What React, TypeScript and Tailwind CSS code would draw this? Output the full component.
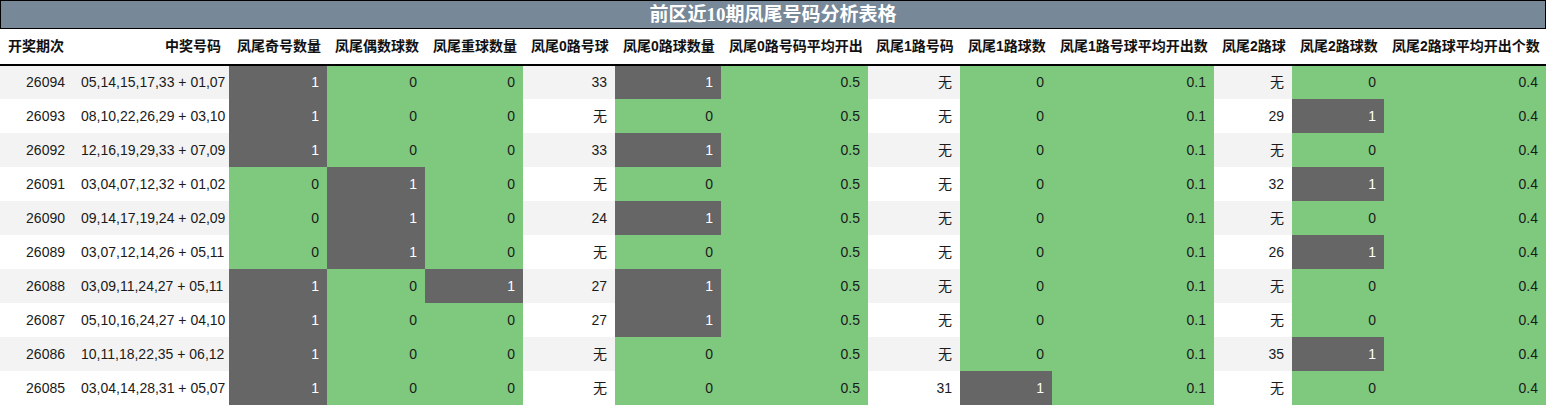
import React from "react";

type Cell = string;
const headers = [
  "开奖期次",
  "中奖号码",
  "凤尾奇号数量",
  "凤尾偶数球数",
  "凤尾重球数量",
  "凤尾0路号球",
  "凤尾0路球数量",
  "凤尾0路号码平均开出",
  "凤尾1路号码",
  "凤尾1路球数",
  "凤尾1路号球平均开出数",
  "凤尾2路球",
  "凤尾2路球数",
  "凤尾2路球平均开出个数",
];
const widths = [73, 156, 98, 98, 98, 92, 106, 147, 92, 92, 162, 78, 92, 162];

// kind: n = plain (row bg), c = count (1 gray, 0 green), a = avg (green)
const kinds = ["n", "n", "c", "c", "c", "n", "c", "a", "n", "c", "a", "n", "c", "a"];

const rows: Cell[][] = [
  ["26094", "05,14,15,17,33 + 01,07", "1", "0", "0", "33", "1", "0.5", "无", "0", "0.1", "无", "0", "0.4"],
  ["26093", "08,10,22,26,29 + 03,10", "1", "0", "0", "无", "0", "0.5", "无", "0", "0.1", "29", "1", "0.4"],
  ["26092", "12,16,19,29,33 + 07,09", "1", "0", "0", "33", "1", "0.5", "无", "0", "0.1", "无", "0", "0.4"],
  ["26091", "03,04,07,12,32 + 01,02", "0", "1", "0", "无", "0", "0.5", "无", "0", "0.1", "32", "1", "0.4"],
  ["26090", "09,14,17,19,24 + 02,09", "0", "1", "0", "24", "1", "0.5", "无", "0", "0.1", "无", "0", "0.4"],
  ["26089", "03,07,12,14,26 + 05,11", "0", "1", "0", "无", "0", "0.5", "无", "0", "0.1", "26", "1", "0.4"],
  ["26088", "03,09,11,24,27 + 05,11", "1", "0", "1", "27", "1", "0.5", "无", "0", "0.1", "无", "0", "0.4"],
  ["26087", "05,10,16,24,27 + 04,10", "1", "0", "0", "27", "1", "0.5", "无", "0", "0.1", "无", "0", "0.4"],
  ["26086", "10,11,18,22,35 + 06,12", "1", "0", "0", "无", "0", "0.5", "无", "0", "0.1", "35", "1", "0.4"],
  ["26085", "03,04,14,28,31 + 05,07", "1", "0", "0", "无", "0", "0.5", "31", "1", "0.1", "无", "0", "0.4"],
];

function cellClass(kind: string, v: string): string {
  if (kind === "c") {
    return v === "1" ? "bg-[#666666] text-white" : "bg-[#7fc97f] text-[#1a1a1a]";
  }
  if (kind === "a") return "bg-[#7fc97f] text-[#1a1a1a]";
  return "text-[#1a1a1a]";
}

export default function App() {
  return (
    <div
      className="w-[1546px] bg-white"
      style={{ fontFamily: '"Liberation Sans", "Noto Sans CJK SC", sans-serif' }}
    >
      <div
        className="h-[29px] border border-black bg-[#778899] text-white font-bold text-[19px] leading-[27px] text-center"
        style={{ fontFamily: '"Liberation Serif", "Noto Sans CJK SC", serif' }}
      >
        前区近10期凤尾号码分析表格
      </div>
      <table className="table-fixed border-collapse w-[1546px]">
        <colgroup>
          {widths.map((w, i) => (
            <col key={i} style={{ width: w }} />
          ))}
        </colgroup>
        <thead>
          <tr className="h-[36px] border-b-2 border-black">
            {headers.map((h, i) => (
              <th
                key={i}
                className={`px-2 py-0 text-[14px] font-bold text-[#111111] whitespace-nowrap ${i === 0 ? "text-left" : "text-right"}`}
              >
                {h}
              </th>
            ))}
          </tr>
        </thead>
        <tbody>
          {rows.map((r, ri) => (
            <tr key={ri} className={`h-[34px] ${ri % 2 === 0 ? "bg-[#f3f3f3]" : "bg-white"}`}>
              {r.map((v, ci) => (
                <td
                  key={ci}
                  className={`px-2 py-0 text-right text-[14px] whitespace-nowrap ${cellClass(kinds[ci], v)}`}
                >
                  {v}
                </td>
              ))}
            </tr>
          ))}
        </tbody>
      </table>
    </div>
  );
}
